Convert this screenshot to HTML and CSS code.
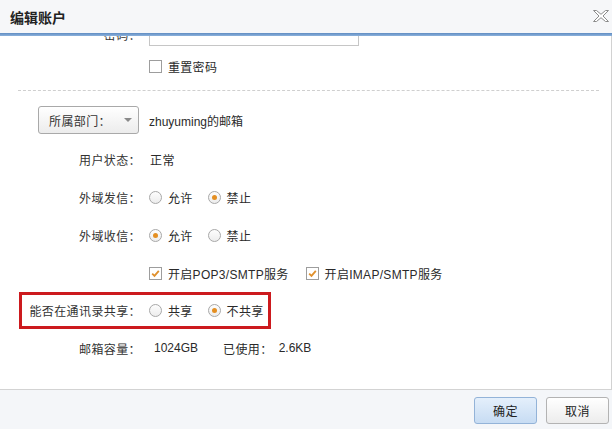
FILE: index.html
```html
<!DOCTYPE html>
<html lang="zh-CN">
<head>
<meta charset="utf-8">
<title>编辑账户</title>
<link rel="stylesheet" href="styles.css">
</head>
<body>
<div class="dialog">
  <div class="header">
    <span class="title">编辑账户</span>
    <svg class="close" width="16" height="12" viewBox="0 0 16 12"><polygon points="0.5,0.5 3.5,0.5 8,4.3 12.5,0.5 15.5,0.5 10,6 15.5,11.5 12.5,11.5 8,7.7 3.5,11.5 0.5,11.5 6,6" fill="#fff" stroke="#8c8c8c" stroke-width="1"/></svg>
  </div>
  <div class="accent"></div>
  <div class="content">
    <div class="scroll">
      <div class="row row-pass">
        <span class="label">密码：</span>
        <span class="field"><span class="input"></span></span>
      </div>
      <div class="row row-reset">
        <span class="label"></span>
        <span class="field"><span class="check"></span><span class="opt-text">重置密码</span></span>
      </div>
      <div class="divider"></div>
      <div class="dept-row">
        <span class="dept-btn"><span>所属部门：</span><span class="caret"></span></span>
        <span class="dept-value">zhuyuming的邮箱</span>
      </div>
      <div class="row first">
        <span class="label">用户状态：</span>
        <span class="field"><span class="value">正常</span></span>
      </div>
      <div class="row">
        <span class="label">外域发信：</span>
        <span class="field">
          <span class="opt"><span class="radio"></span><span class="opt-text">允许</span></span>
          <span class="opt"><span class="radio on"></span><span class="opt-text">禁止</span></span>
        </span>
      </div>
      <div class="row">
        <span class="label">外域收信：</span>
        <span class="field">
          <span class="opt"><span class="radio on"></span><span class="opt-text">允许</span></span>
          <span class="opt"><span class="radio"></span><span class="opt-text">禁止</span></span>
        </span>
      </div>
      <div class="row">
        <span class="label"></span>
        <span class="field">
          <span class="opt wide"><span class="check"><svg width="11" height="11" viewBox="0 0 11 11"><path d="M2.2 5.6 L4.5 7.9 L8.8 2.8" fill="none" stroke="#e0902c" stroke-width="1.8"/></svg></span><span class="opt-text">开启POP3/SMTP服务</span></span>
          <span class="opt"><span class="check"><svg width="11" height="11" viewBox="0 0 11 11"><path d="M2.2 5.6 L4.5 7.9 L8.8 2.8" fill="none" stroke="#e0902c" stroke-width="1.8"/></svg></span><span class="opt-text">开启IMAP/SMTP服务</span></span>
        </span>
      </div>
      <div class="row highlight">
        <span class="label">能否在通讯录共享：</span>
        <span class="field">
          <span class="opt"><span class="radio"></span><span class="opt-text">共享</span></span>
          <span class="opt"><span class="radio on"></span><span class="opt-text">不共享</span></span>
        </span>
      </div>
      <div class="row">
        <span class="label">邮箱容量：</span>
        <span class="field cap">
          <span class="cap-val">1024GB</span>
          <span class="cap-label">已使用：</span>
          <span class="cap-used">2.6KB</span>
        </span>
      </div>
    </div>
  </div>
  <div class="footer">
    <button class="btn primary">确定</button>
    <button class="btn">取消</button>
  </div>
</div>
</body>
</html>
```
FILE: styles.css
```css
* { box-sizing: border-box; }
html, body { margin: 0; padding: 0; }
body {
  font-family: "Liberation Sans", "Noto Sans CJK SC", sans-serif;
  font-size: 12px;
  color: #2a2a2a;
  background: #fff;
}
.dialog { width: 612px; height: 429px; display: flex; flex-direction: column; overflow: hidden; }
.header {
  height: 33px;
  flex: none;
  background: #f6f7f9;
  display: flex;
  align-items: center;
  justify-content: space-between;
  padding: 0 3px 0 10px;
}
.title { font-size: 14px; font-weight: bold; color: #222; }
.close { display: block; margin-top: -2px; }
.accent { height: 3px; flex: none; background: linear-gradient(#5f8cc2, #8db2dc); }
.content {
  height: 353px;
  flex: none;
  overflow: hidden;
  border-right: 1px solid #d2d2d2;
  background: #fff;
}
.scroll { margin-top: -15px; }
.row { display: flex; align-items: center; height: 38px; white-space: nowrap; }
.row.first { margin-top: 6px; }
.row-pass { height: 26px; margin-bottom: 1px; }
.row-reset { height: 20px; margin-top: 9px; }
.label {
  width: 141px;
  flex: none;
  text-align: right;
  letter-spacing: 0.4px;
  color: #333;
}
.field { margin-left: 8px; display: flex; align-items: center; flex: none; white-space: nowrap; }
.input { display: block; width: 210px; height: 24px; border: 1px solid #c6c6c6; background: #fff; }
.check {
  width: 13px; height: 13px;
  border: 1px solid #9d9d9d;
  background: #fff;
  display: inline-flex;
  align-items: center;
  justify-content: center;
  flex: none;
}
.check svg { display: block; }
.radio {
  width: 13px; height: 13px;
  border-radius: 50%;
  border: 1px solid #a8a8a8;
  background: linear-gradient(#fdfdfd, #ededed);
  display: inline-flex;
  align-items: center;
  justify-content: center;
  flex: none;
}
.radio.on::after {
  content: "";
  width: 5px; height: 5px;
  border-radius: 50%;
  background: #e48f22;
}
.opt { display: inline-flex; align-items: center; margin-right: 15px; flex: none; white-space: nowrap; }
.opt.wide { margin-right: 17px; }
.opt-text { margin-left: 6px; letter-spacing: 0.3px; }
.value { margin-left: 1px; letter-spacing: 0.4px; }
.divider { margin: 14px 12px 0 18px; border-top: 1px dashed #cfcfcf; }
.dept-row { display: flex; align-items: center; margin-top: 15px; padding-left: 38px; }
.dept-btn {
  width: 101px; height: 28px;
  border: 1px solid #a9a9a9;
  border-radius: 3px;
  background: linear-gradient(#ffffff, #ececec);
  display: flex;
  align-items: center;
  padding-left: 10px;
  letter-spacing: 0.4px;
  color: #333;
}
.caret {
  margin-left: 13px;
  width: 0; height: 0;
  border-left: 4px solid transparent;
  border-right: 4px solid transparent;
  border-top: 4px solid #8a8a8a;
}
.dept-value { margin-left: 10px; }
.row.highlight {
  height: 37px;
  width: 252px;
  margin-left: 19px;
  border: 3px solid #cc1a1e;
}
.row.highlight .label { width: 119px; }
.cap-val { margin-left: 5px; }
.cap-label { margin-left: 25px; letter-spacing: 0.4px; }
.cap-used { margin-left: 6px; }
.footer {
  height: 40px;
  flex: none;
  border-top: 1px solid #d3d3d3;
  background: #f4f6f9;
  display: flex;
  justify-content: flex-end;
  align-items: flex-start;
  gap: 9px;
  padding: 7px 3px 0 0;
}
.btn {
  width: 63px; height: 27px;
  font-family: "Liberation Sans", "Noto Sans CJK SC", sans-serif;
  font-size: 12px;
  color: #222;
  border: 1px solid #b3b3b3;
  border-radius: 3px;
  background: linear-gradient(#ffffff, #ececec);
  padding: 0;
  letter-spacing: 0.5px;
}
.btn.primary {
  border-color: #93b3d8;
  background: linear-gradient(#e4effb, #c7dcf3);
}
```
